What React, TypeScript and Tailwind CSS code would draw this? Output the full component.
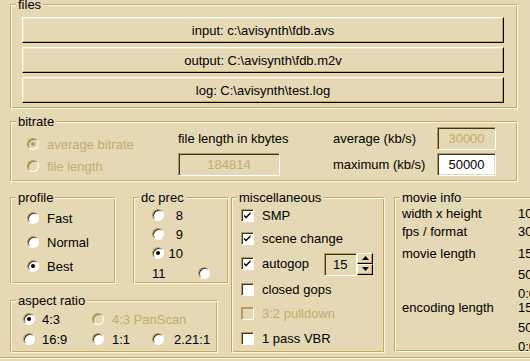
import React from "react";

function Group({ label, className, children }: { label: string; className: string; children?: React.ReactNode }) {
  return (
    <div
      className={`relative shrink-0 border border-t-[#c6aa62] border-l-[#c6aa62] border-b-[#fff8e4] border-r-[#fff8e4] shadow-[inset_1px_1px_0_#fff8e4,inset_-1px_-1px_0_#c6aa62] ${className}`}
    >
      <span className="absolute left-[5px] top-[-8px] bg-[#e5d9b5] px-[2px] leading-[15px] whitespace-nowrap">{label}</span>
      {children}
    </div>
  );
}

function Radio({ checked, disabled }: { checked?: boolean; disabled?: boolean }) {
  return (
    <span
      className={`relative inline-block h-[12px] w-[12px] shrink-0 rounded-full border border-t-[#b39a58] border-l-[#b39a58] border-r-white border-b-white ${
        disabled ? "bg-[#e5d9b5] shadow-[inset_1px_1px_0_#a08848]" : "bg-white shadow-[inset_1px_1px_0_#3d3420]"
      }`}
    >
      {checked && (
        <span
          className={`absolute left-[3px] top-[3px] h-[4px] w-[4px] rounded-full ${disabled ? "bg-[#b49850]" : "bg-black"}`}
        />
      )}
    </span>
  );
}

function Check({ checked, disabled }: { checked?: boolean; disabled?: boolean }) {
  return (
    <span
      className={`relative inline-block h-[13px] w-[13px] shrink-0 border border-t-[#b39a58] border-l-[#b39a58] border-r-white border-b-white ${
        disabled ? "bg-[#e5d9b5] shadow-[inset_1px_1px_0_#b8a060]" : "bg-white shadow-[inset_1px_1px_0_#3d3420]"
      }`}
    >
      {checked && (
        <svg className="absolute left-0 top-0" width="11" height="11" viewBox="0 0 11 11">
          <path d="M2 4.5 L4 6.5 L8.5 2 L8.5 4 L4 8.5 L2 6.5 Z" fill="#000" />
        </svg>
      )}
    </span>
  );
}

function Button({ children }: { children: React.ReactNode }) {
  return (
    <div className="flex h-[26px] w-[482px] items-center justify-center border border-t-[#fffbee] border-l-[#fffbee] border-b-black border-r-black bg-[#e5d9b5] shadow-[inset_-1px_-1px_0_#c6aa62,inset_1px_1px_0_#efe4c4]">
      {children}
    </div>
  );
}

function Sunken({ className, children }: { className: string; children?: React.ReactNode }) {
  return (
    <div
      className={`flex items-center justify-center border border-t-[#b39a58] border-l-[#b39a58] border-r-white border-b-white shadow-[inset_1px_1px_0_#3d3420,inset_-1px_-1px_0_#e5d9b5] ${className}`}
    >
      {children}
    </div>
  );
}

function SpinHalf({ up }: { up?: boolean }) {
  return (
    <div className="flex h-[11px] w-[16px] items-center justify-center border border-t-[#fffbee] border-l-[#fffbee] border-b-black border-r-black shadow-[inset_-1px_-1px_0_#c6aa62]">
      <svg width="7" height="4" viewBox="0 0 7 4">
        {up ? <path d="M3.5 0 L7 4 L0 4 Z" fill="#000" /> : <path d="M0 0 L7 0 L3.5 4 Z" fill="#000" />}
      </svg>
    </div>
  );
}

export default function App() {
  const dis = "text-[#c4ab6e]";
  return (
    <div className="flex h-[361px] w-[530px] flex-col overflow-hidden bg-[#e5d9b5] pl-[10px] font-['Liberation_Sans',Arial,sans-serif] text-[13px] leading-[15px] text-black">
      {/* files */}
      <Group label="files" className="mt-[4px] h-[105px] w-[508px]">
        <div className="flex flex-col gap-[4px] pl-[11px] pt-[12px]">
          <Button>input: c:\avisynth\fdb.avs</Button>
          <Button>output: C:\avisynth\fdb.m2v</Button>
          <Button>log: C:\avisynth\test.log</Button>
        </div>
      </Group>

      {/* bitrate */}
      <Group label="bitrate" className="mt-[12px] h-[61px] w-[508px]">
        <div className="flex pl-[16px]">
          <div className="flex w-[151px] flex-col gap-[6px] pt-[14px]">
            <div className="flex h-[16px] items-center gap-[8px]">
              <Radio checked disabled />
              <span className={dis}>average bitrate</span>
            </div>
            <div className="flex h-[16px] items-center gap-[8px]">
              <Radio disabled />
              <span className={dis}>file length</span>
            </div>
          </div>
          <div className="flex w-[155px] flex-col pt-[9px]">
            <div className="h-[16px] leading-[16px]">file length in kbytes</div>
            <Sunken className={`mt-[6px] h-[23px] w-[102px] ${dis}`}>184814</Sunken>
          </div>
          <div className="flex flex-col gap-[3px] pt-[5px]">
            <div className="flex h-[23px] items-center">
              <span className="w-[104px]">average (kb/s)</span>
              <Sunken className={`h-[23px] w-[59px] ${dis}`}>30000</Sunken>
            </div>
            <div className="flex h-[23px] items-center">
              <span className="w-[104px]">maximum (kb/s)</span>
              <Sunken className="h-[23px] w-[59px] bg-white">50000</Sunken>
            </div>
          </div>
        </div>
      </Group>

      {/* bottom */}
      <div className="mt-[15px] flex h-[156px]">
        <div className="flex w-[219px] shrink-0 flex-col">
          <div className="flex h-[87px]">
            <Group label="profile" className="h-[87px] w-[106px]">
              <div className="flex flex-col gap-[8px] pl-[16px] pt-[12px]">
                <div className="flex h-[16px] items-center gap-[8px]">
                  <Radio />
                  <span>Fast</span>
                </div>
                <div className="flex h-[16px] items-center gap-[8px]">
                  <Radio />
                  <span>Normal</span>
                </div>
                <div className="flex h-[16px] items-center gap-[8px]">
                  <Radio checked />
                  <span>Best</span>
                </div>
              </div>
            </Group>
            <Group label="dc prec" className="ml-[17px] h-[87px] w-[96px]">
              <div className="flex flex-col pl-[18px] pt-[9px]">
                <div className="flex h-[16px] items-center">
                  <Radio />
                  <span className="w-[19px] text-right">8</span>
                </div>
                <div className="mt-[3px] flex h-[16px] items-center">
                  <Radio />
                  <span className="w-[19px] text-right">9</span>
                </div>
                <div className="mt-[3px] flex h-[16px] items-center">
                  <Radio checked />
                  <span className="w-[19px] text-right">10</span>
                </div>
                <div className="mt-[4px] flex h-[16px] items-center">
                  <span className="w-[46px]">11</span>
                  <Radio />
                </div>
              </div>
            </Group>
          </div>
          <Group label="aspect ratio" className="mt-[16px] h-[53px] w-[208px]">
            <div className="flex flex-col gap-[4px] pl-[12px] pt-[10px]">
              <div className="flex h-[16px] items-center">
                <div className="flex w-[69px] items-center gap-[7px]">
                  <Radio checked />
                  <span>4:3</span>
                </div>
                <div className="flex items-center gap-[8px]">
                  <Radio disabled />
                  <span className={dis}>4:3 PanScan</span>
                </div>
              </div>
              <div className="flex h-[16px] items-center">
                <div className="flex w-[69px] items-center gap-[7px]">
                  <Radio />
                  <span>16:9</span>
                </div>
                <div className="flex w-[60px] items-center gap-[8px]">
                  <Radio />
                  <span>1:1</span>
                </div>
                <div className="flex items-center gap-[10px]">
                  <Radio />
                  <span>2.21:1</span>
                </div>
              </div>
            </div>
          </Group>
        </div>

        <Group label="miscellaneous" className="ml-[2px] h-[156px] w-[154px]">
          <div className="flex flex-col pl-[9px] pt-[9px]">
            <div className="flex h-[16px] items-center gap-[8px]">
              <Check checked />
              <span>SMP</span>
            </div>
            <div className="mt-[7px] flex h-[16px] items-center gap-[8px]">
              <Check checked />
              <span>scene change</span>
            </div>
            <div className="mt-[9px] flex h-[16px] items-center gap-[8px]">
              <Check checked />
              <span className="w-[62px]">autogop</span>
              <div className="ml-[-8px] mt-[2px] flex">
                <Sunken className="h-[23px] w-[33px] justify-start pl-[8px]">15</Sunken>
                <div className="flex flex-col">
                  <SpinHalf up />
                  <SpinHalf />
                </div>
              </div>
            </div>
            <div className="mt-[10px] flex h-[16px] items-center gap-[8px]">
              <Check />
              <span>closed gops</span>
            </div>
            <div className="mt-[8px] flex h-[16px] items-center gap-[8px]">
              <Check disabled />
              <span className={dis}>3:2 pulldown</span>
            </div>
            <div className="mt-[9px] flex h-[16px] items-center gap-[8px]">
              <Check />
              <span>1 pass VBR</span>
            </div>
          </div>
        </Group>

        <Group label="movie info" className="ml-[9px] h-[155px] w-[200px]">
          <div className="flex flex-col whitespace-nowrap pl-[7px] pt-[8px]">
            <div className="flex h-[15px]">
              <span className="w-[116px] shrink-0">width x height</span>
              <span>1024 x 576</span>
            </div>
            <div className="mt-[3px] flex h-[15px]">
              <span className="w-[116px] shrink-0">fps / format</span>
              <span>30 fps</span>
            </div>
            <div className="mt-[7px] flex h-[15px]">
              <span className="w-[116px] shrink-0">movie length</span>
              <span>15000 frames</span>
            </div>
            <div className="mt-[6px] flex h-[15px]">
              <span className="w-[116px] shrink-0"></span>
              <span>500.0 s</span>
            </div>
            <div className="mt-[4px] flex h-[15px]">
              <span className="w-[116px] shrink-0"></span>
              <span>0:08:20</span>
            </div>
            <div className="mt-[-1px] flex h-[15px]">
              <span className="w-[116px] shrink-0">encoding length</span>
              <span>15000 frames</span>
            </div>
            <div className="mt-[5px] flex h-[15px]">
              <span className="w-[116px] shrink-0"></span>
              <span>500.0 s</span>
            </div>
            <div className="mt-[4px] flex h-[15px]">
              <span className="w-[116px] shrink-0"></span>
              <span>0:08:20</span>
            </div>
          </div>
        </Group>
      </div>

      <div className="ml-[-10px] mt-[4px] h-[2px] w-[530px] shrink-0 border-t border-b border-t-[#c6aa62] border-b-[#fff8e4]" />
    </div>
  );
}
